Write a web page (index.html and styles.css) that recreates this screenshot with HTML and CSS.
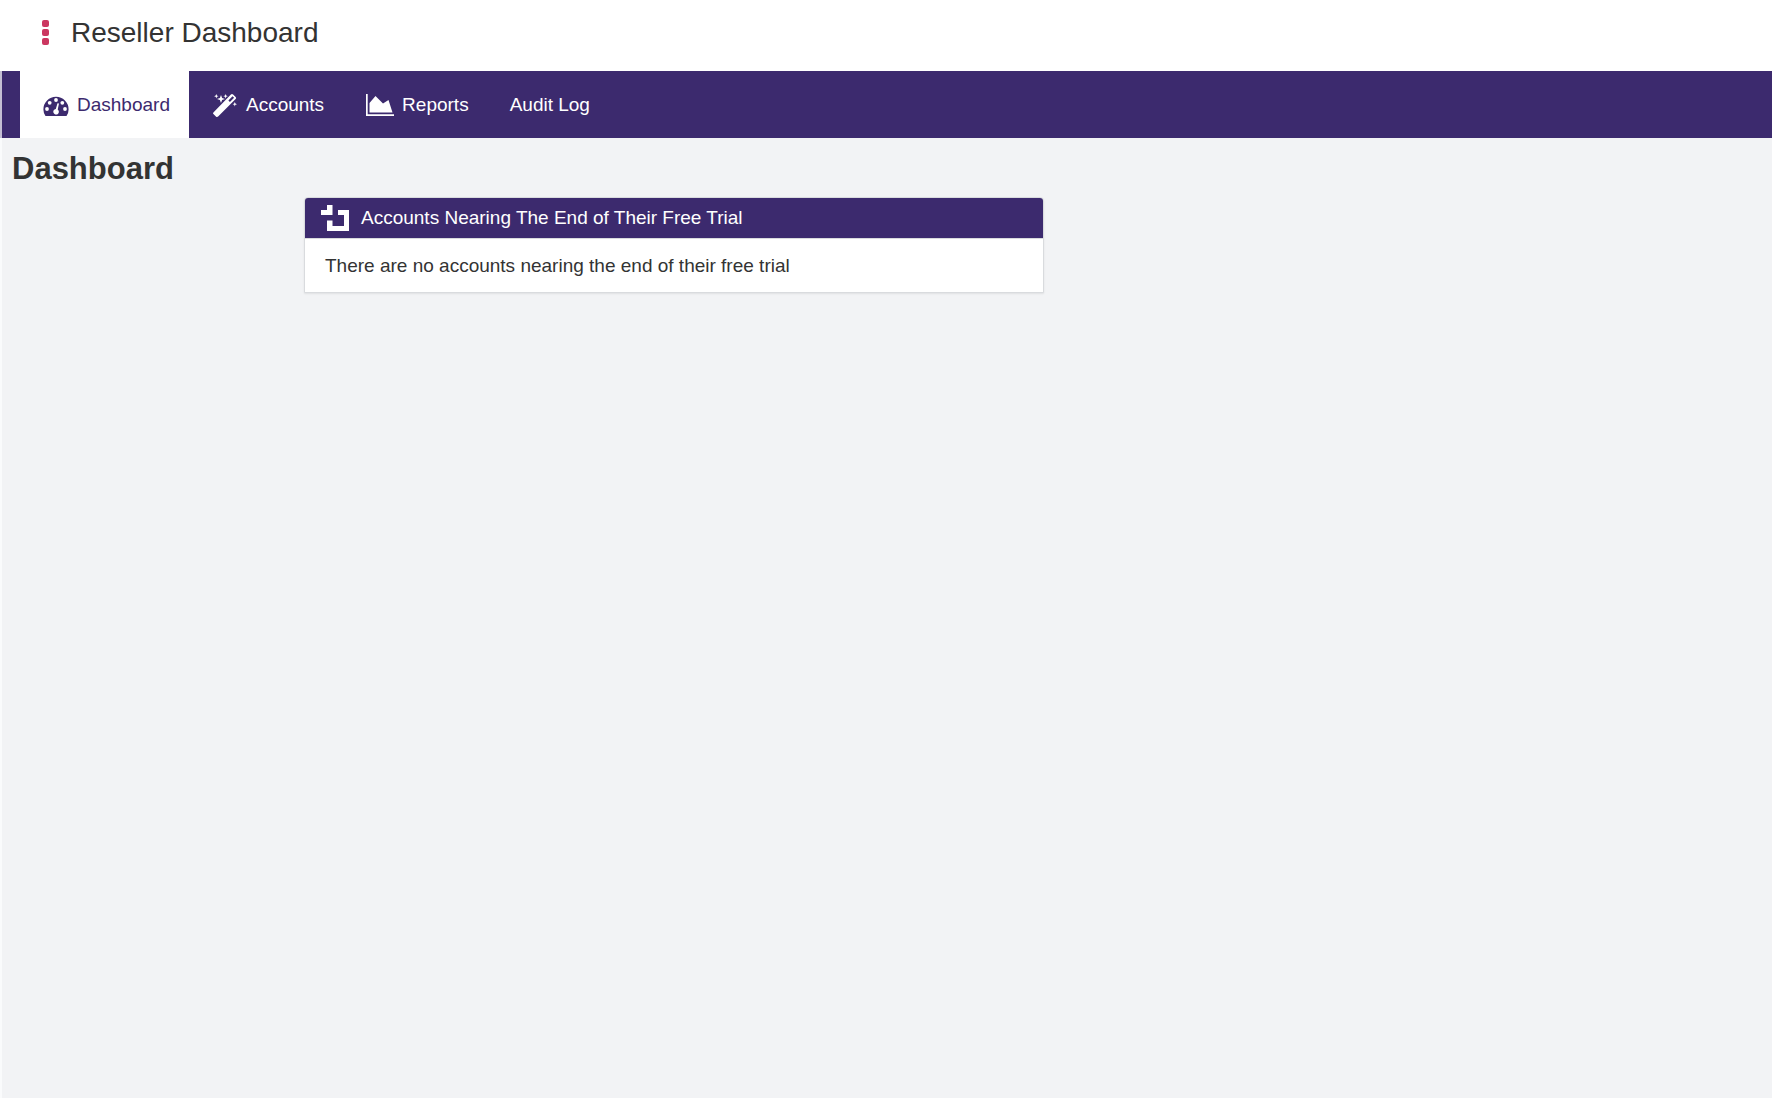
FILE: index.html
```html
<!DOCTYPE html>
<html lang="en">
<head>
<meta charset="utf-8">
<meta name="viewport" content="width=device-width, initial-scale=1">
<title>Reseller Dashboard</title>
<link rel="stylesheet" href="styles.css">
</head>
<body>
<header class="topbar">
  <button class="menu-button" type="button" aria-label="Menu">
    <svg width="7" height="25" viewBox="0 0 7 25" fill="currentColor" aria-hidden="true">
      <rect width="7" height="7" rx="2"/><rect y="9" width="7" height="7" rx="2"/><rect y="18" width="7" height="7" rx="2"/>
    </svg>
  </button>
  <span class="brand">Reseller Dashboard</span>
</header>
<nav class="nav" aria-label="Main">
  <a class="nav-link active" href="#dashboard" aria-current="page">
    <svg width="28" height="24" viewBox="0 0 28 24" aria-hidden="true">
      <path fill="currentColor" d="M3.500 23Q1.400 20 1.400 16.400A12.600 12.600 0 0 1 26.600 16.400Q26.600 20 24.500 23Z"/>
      <g fill="#fff"><circle cx="5" cy="16" r="1.900"/><circle cx="7.700" cy="9.800" r="1.900"/><circle cx="14" cy="7" r="1.900"/><circle cx="20.300" cy="9.800" r="1.900"/><circle cx="23" cy="16" r="1.900"/><path d="M15.500 10.200L17 10.600L15.700 16.500A2.800 2.800 0 1 1 13.800 16Z"/></g>
    </svg>
    Dashboard
  </a>
  <a class="nav-link" href="#accounts">
    <svg width="28" height="24" viewBox="0 0 28 24" fill="currentColor" aria-hidden="true">
      <path fill-rule="evenodd" d="M2.400 19.400L19.900 1.400Q21 .4 22.100 1.400L24.600 3.900Q25.600 5 24.600 6.100L7.100 23.500Q6 24.400 4.900 23.400L2.400 21Q1.700 20.200 2.400 19.400ZM17.400 7.400L18.900 8.900L23.100 4.800L21.500 3.200Z"/>
      <path d="M10 2L11.100 4.900L14 6L11.100 7.100L10 10L8.900 7.100L6 6L8.900 4.900ZM5.300 1L5.900 2.600L7.500 3.200L5.900 3.800L5.300 5.400L4.700 3.800L3.100 3.200L4.700 2.600ZM14.600 1L15.200 2.600L16.800 3.200L15.200 3.800L14.600 5.400L14 3.800L12.400 3.200L14 2.600ZM23.800 9L24.400 10.600L26 11.200L24.400 11.800L23.800 13.400L23.200 11.800L21.600 11.200L23.200 10.600Z"/>
    </svg>
    Accounts
  </a>
  <a class="nav-link" href="#reports">
    <svg width="30" height="24" viewBox="0 0 30 24" fill="currentColor" aria-hidden="true">
      <path d="M1 1H2.700V21.200H29V23H1ZM4.500 19.500V10L10.500 3L18 10.500L23.500 7L27.500 19.500Z"/>
    </svg>
    Reports
  </a>
  <a class="nav-link" href="#audit-log">Audit Log</a>
</nav>
<main class="content">
  <h1 class="page-title">Dashboard</h1>
  <div class="panels">
    <section class="panel" aria-labelledby="trial-title">
      <div class="panel-header">
        <svg width="28" height="26" viewBox="0 0 28 26" fill="currentColor" aria-hidden="true">
          <path d="M6 0H11.500V10H0V5H6ZM17 5H28V26H6V15.500H11.500V21H23V10H17Z"/>
        </svg>
        <h2 class="panel-title" id="trial-title">Accounts Nearing The End of Their Free Trial</h2>
      </div>
      <p class="panel-body">There are no accounts nearing the end of their free trial</p>
    </section>
  </div>
</main>
</body>
</html>
```
FILE: styles.css
```css
* {
  box-sizing: border-box;
}

body {
  min-height: 100vh;
  margin: 0;
  background: #f2f3f5;
  box-shadow: inset 2px 0 #fafbfc;
  color: #333;
  font-family: "Liberation Sans", Arial, sans-serif;
  font-size: 19px;
  line-height: 24px;
}

.topbar {
  display: flex;
  align-items: center;
  gap: 18px;
  height: 71px;
  padding: 0 38px 6px;
  background: #fff;
}

.menu-button {
  display: flex;
  padding: 4px;
  border: 0;
  background: none;
  color: #cb3760;
}

.brand {
  font-size: 28px;
  line-height: 32px;
}

.nav {
  display: flex;
  min-height: 67px;
  padding-left: 18px;
  border-left: 2px solid #c4bed3;
  background: #3c2a6e;
}

.nav-link {
  display: flex;
  align-items: center;
  gap: 7px;
  padding: 0 19px 0 22px;
  color: #fff;
  text-decoration: none;
}

.nav-link.active {
  background: #fff;
  color: #3c2a6e;
}

.content {
  padding: 15px 0 24px 12px;
}

.page-title {
  margin: 0 0 12px;
  font-size: 31px;
  line-height: 32px;
}

.panels {
  display: grid;
  grid-template-columns: 73fr 185fr 182fr;
}

.panel {
  grid-column: 2;
  border: 1px solid #d9dbde;
  border-radius: 4px 4px 0 0;
  background: #fff;
  box-shadow: 0 1px 2px rgba(0, 0, 0, 0.08);
}

.panel-header {
  display: flex;
  align-items: center;
  gap: 12px;
  min-height: 41px;
  padding: 0 16px;
  border-bottom: 1px solid #d9dbde;
  border-radius: 3px 3px 0 0;
  background: #3c2a6e;
  color: #fff;
}

.panel-title {
  margin: 0;
  font-size: 19px;
  font-weight: 400;
}

.panel-body {
  margin: 0;
  padding: 15px 20px 14px;
}
```
